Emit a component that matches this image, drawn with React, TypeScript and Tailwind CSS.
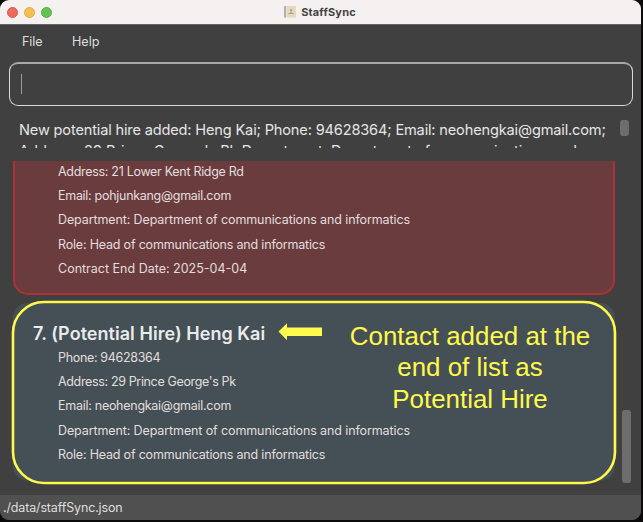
type Line = { text: string; cls: string };

const employee: Line[] = [
  { text: "Address: 21 Lower Kent Ridge Rd", cls: "tracking-[-0.3px]" },
  { text: "Email: pohjunkang@gmail.com", cls: "tracking-[-0.29px]" },
  { text: "Department: Department of communications and informatics", cls: "tracking-[-0.11px]" },
  { text: "Role: Head of communications and informatics", cls: "tracking-[-0.19px]" },
  { text: "Contract End Date: 2025-04-04", cls: "tracking-[0px]" },
];

const hire: Line[] = [
  { text: "Phone: 94628364", cls: "tracking-[-0.33px]" },
  { text: "Address: 29 Prince George's Pk", cls: "tracking-[-0.35px]" },
  { text: "Email: neohengkai@gmail.com", cls: "tracking-[-0.27px]" },
  { text: "Department: Department of communications and informatics", cls: "tracking-[-0.11px]" },
  { text: "Role: Head of communications and informatics", cls: "tracking-[-0.19px]" },
];

function Details({ lines }: { lines: Line[] }) {
  return (
    <div className="flex flex-col items-start pl-[43px] text-[12.5px] leading-[24.2px] text-[#e3dede]">
      {lines.map((l) => (
        <span key={l.text} className={l.cls}>{l.text}</span>
      ))}
    </div>
  );
}

export default function App() {
  return (
    <div className="h-[522px] w-[643px] overflow-hidden bg-[#0c0a0b] pr-[2px] pb-[2px] font-['Inter','Liberation_Sans',sans-serif] whitespace-nowrap">
      <div className="flex h-[520px] flex-col overflow-hidden rounded-[9px] bg-[#404040]">
        <header className="relative flex h-[24px] shrink-0 items-center justify-center bg-[#f5f1f0] pr-px">
          <div className="absolute top-[7px] left-[7px] flex gap-[6.5px]">
            <i className="size-[10.6px] rounded-full border border-[#dc5850] bg-[#ed6a5f]" />
            <i className="size-[10.6px] rounded-full border border-[#dfab43] bg-[#f5bf4f]" />
            <i className="size-[10.6px] rounded-full border border-[#52ae43] bg-[#61c554]" />
          </div>
          <svg width="12" height="12" viewBox="0 0 12 12" className="mr-[5px]">
            <rect width="12" height="11.5" rx="0.7" fill="#e8d8bd" />
            <rect width="2" height="11.5" fill="#b4aead" />
            <rect x="2" width="0.6" height="11.5" fill="#f0ebe4" />
            <circle cx="7.1" cy="4.1" r="1.2" fill="#aaa196" />
            <path d="M6.6 5h1v1.900h2.200v1.200H4.400V6.900h2.200z" fill="#aaa196" />
          </svg>
          <span className="text-[11px] font-bold tracking-[0.17px] text-[#454242]">StaffSync</span>
        </header>
        <nav className="flex h-[38px] shrink-0 items-center border-t border-[#666] pb-[3px] pl-[22px] text-[12.6px] text-[#dedede]">
          <span className="w-[50px] tracking-[-0.1px]">File</span>
          <span>Help</span>
        </nav>
        <div className="mr-[8px] ml-[9px] flex h-[44px] shrink-0 items-center rounded-[9px] border-[1.5px] border-t-2 border-[#d8d8d8] border-t-[#a9a7a9] pl-[11px]">
          <i className="-mt-px h-[20px] w-px bg-[#999]" />
        </div>
        <div className="mt-[14px] flex h-[28px] shrink-0 overflow-hidden pl-[19px] text-[14.6px] leading-[21px] text-[#e6e6e6]">
          <div className="w-[601px] overflow-hidden">
            <p className="tracking-[-0.17px]">New potential hire added: Heng Kai; Phone: 94628364; Email: neohengkai@gmail.com;</p>
            <p className="tracking-[-0.04px]">Address: 29 Prince George's Pk Department: Department of communications and</p>
          </div>
          <i className="h-[16px] w-[9px] rounded-[3px] bg-[#6d6d6d]" />
        </div>
        <main className="mt-[13px] flex h-[334px] shrink-0 overflow-hidden pl-[13px]">
          <div className="w-[602px] shrink-0">
            <section className="h-[135px] rounded-b-[15px] border-x-2 border-b-2 border-[#ad3236] bg-[#6a3c3e]">
              <div className="-mt-[1px]"><Details lines={employee} /></div>
            </section>
            <section className="relative mt-[8px] h-[178px] rounded-[15px] bg-[#445055] px-[2px] pt-[19px]">
              <h1 className="pl-[18px] text-[18px] leading-[24px] font-semibold tracking-[0.04px] text-[#e9ebec]">7. (Potential Hire) Heng Kai</h1>
              <Details lines={hire} />
              <svg className="absolute -top-[4px] -left-[3px]" width="608" height="188" viewBox="10 300 608 188" fill="none">
                <rect x="13" y="303" width="602" height="181" rx="31" stroke="#fff84d" strokeWidth="2.600" />
                <path d="M278.500 332.500 287 324.200v4.200h35v8.700h-35v4.200z" fill="#fff84d" />
              </svg>
              <p className="absolute top-[18px] left-[327px] w-[260px] text-center font-['Liberation_Sans',Arial,sans-serif] text-[25.9px] leading-[31.300px] text-[#fff84d]">
                Contact added at the<br />end of list as<br />Potential Hire
              </p>
            </section>
          </div>
          <i className="mt-[249px] ml-[7px] h-[73px] w-[9px] rounded-[3px] bg-[#6d6d6d]" />
        </main>
        <footer className="flex h-[25px] shrink-0 items-center bg-[#505050] pt-[2px] pl-[3px] text-[12.5px] tracking-[-0.15px] text-[#dedede]">./data/staffSync.json</footer>
      </div>
    </div>
  );
}
